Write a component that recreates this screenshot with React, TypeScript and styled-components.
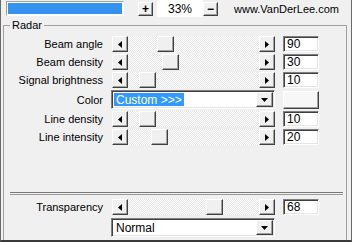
import React from 'react'
import styled, { createGlobalStyle, css } from 'styled-components'

const GlobalStyle = createGlobalStyle`
  html, body {
    margin: 0;
    padding: 0;
    background: #f0f0f0;
  }
  body {
    font-family: "Liberation Sans", Arial, sans-serif;
    font-size: 11px;
    color: #000;
  }
`

const raised = css`
  box-sizing: border-box;
  background: #f0f0f0;
  border: 1px solid;
  border-color: #fff #404040 #404040 #fff;
  box-shadow: inset -1px -1px 0 #a0a0a0;
`

const sunken = css`
  box-sizing: border-box;
  background: #fff;
  border: 1px solid;
  border-color: #808080 #fff #fff #808080;
  box-shadow: inset 1px 1px 0 #404040, inset -1px -1px 0 #e4e4e4;
`

const Frame = styled.div`
  width: 352px;
  height: 242px;
  box-sizing: border-box;
  border-left: 1px solid #6a6a6a;
  border-right: 1px solid #6a6a6a;
  border-bottom: 2px solid #3a3a3a;
  display: flex;
  flex-direction: column;
  overflow: hidden;
  background: #f0f0f0;
`

const TopBar = styled.div`
  height: 19px;
  display: flex;
  align-items: center;
  padding-left: 5px;
  flex-shrink: 0;
`

const Progress = styled.div`
  width: 118px;
  height: 15px;
  box-sizing: border-box;
  border: 1px solid;
  border-color: #a0a0a0 #fff #fff #a0a0a0;
  background: #fff;
  padding: 1px;
  margin-bottom: 2px;
  display: flex;
`

const ProgressFill = styled.div`
  height: 100%;
  background: #3592ee;
`

const ZoomButton = styled.div<{ $first?: boolean }>`
  ${raised}
  width: 15px;
  height: 14px;
  margin-left: ${p => (p.$first ? '14px' : '0')};
  margin-bottom: 2px;
  display: flex;
  align-items: center;
  justify-content: center;
  font-size: 12px;
  font-weight: bold;
  line-height: 1;
`

const ZoomValue = styled.div`
  width: 46px;
  height: 17px;
  margin: 0 0 2px 4px;
  background: #fff;
  display: flex;
  align-items: center;
  justify-content: center;
  font-size: 12px;
`

const SiteLink = styled.div`
  margin-left: 16px;
  margin-bottom: 2px;
  white-space: nowrap;
`

const Group = styled.fieldset`
  flex: 1;
  margin: 0 4px 0 2px;
  padding: 0;
  min-width: 0;
  border: 1px solid #a0a0a0;
  border-bottom: none;
`

const Legend = styled.legend`
  margin-left: 6px;
  padding: 0 2px;
  line-height: 13px;
  font-size: 11px;
`

const Rows = styled.div`
  display: flex;
  flex-direction: column;
  gap: 2px;
  padding-top: 4px;
`

const Row = styled.div<{ $tall?: boolean; $top?: number }>`
  display: grid;
  grid-template-columns: 99px 164px 36px;
  column-gap: 8px;
  align-items: center;
  height: ${p => (p.$tall ? '19px' : '16px')};
  margin-top: ${p => p.$top ?? 0}px;
`

const Label = styled.div`
  text-align: right;
  white-space: nowrap;
`

const Slider = styled.div`
  display: flex;
  height: 16px;
  margin-left: 1px;
`

const ArrowButton = styled.div`
  ${raised}
  width: 16px;
  height: 16px;
  flex-shrink: 0;
  display: flex;
  align-items: center;
  justify-content: center;
`

const Track = styled.div`
  flex: 1;
  height: 16px;
  display: flex;
  background: repeating-conic-gradient(#fff 0 25%, #e6e6e6 0 50%) 0 0 / 2px 2px;
`

const Thumb = styled.div`
  ${raised}
  width: 17px;
  height: 16px;
`

const ValueBox = styled.div`
  ${sunken}
  height: 16px;
  padding-left: 3px;
  display: flex;
  align-items: center;
  font-size: 12px;
`

const Select = styled.div`
  ${sunken}
  height: 19px;
  display: flex;
  align-items: center;
  padding: 2px 1px 2px 2px;
  font-size: 12px;
`

const SelectText = styled.span<{ $selected?: boolean }>`
  flex: 1;
  display: flex;
  align-items: center;
  height: 100%;
  span {
    padding: 0 2px;
    height: 100%;
    display: flex;
    align-items: center;
    background: ${p => (p.$selected ? '#3399ff' : 'transparent')};
    color: ${p => (p.$selected ? '#fff' : '#000')};
  }
`

const DropButton = styled.div`
  ${raised}
  width: 17px;
  height: 15px;
  display: flex;
  align-items: center;
  justify-content: center;
`

const Swatch = styled.div`
  ${raised}
  height: 18px;
  background: #f7f7f7;
`

const Separator = styled.div`
  height: 1px;
  margin: 47px 3px 0 6px;
  border-top: 1px solid #7a7a7a;
  border-bottom: 1px solid #9a9a9a;
`

function Arrow ({ dir }: { dir: 'left' | 'right' | 'down' }) {
  if (dir === 'down') {
    return (
      <svg width='7' height='4' viewBox='0 0 7 4'>
        <polygon points='0,0 7,0 3.5,4' fill='#000' />
      </svg>
    )
  }
  return (
    <svg width='4' height='7' viewBox='0 0 4 7'>
      <polygon points={dir === 'left' ? '4,0 4,7 0,3.5' : '0,0 0,7 4,3.5'} fill='#000' />
    </svg>
  )
}

const TRACK = 131 - 17

function SliderRow ({ label, value, max, top }: { label: string, value: number, max: number, top?: number }) {
  const offset = Math.round((value / max) * TRACK)
  return (
    <Row $top={top}>
      <Label>{label}</Label>
      <Slider>
        <ArrowButton><Arrow dir='left' /></ArrowButton>
        <Track>
          <Thumb style={{ marginLeft: offset }} />
        </Track>
        <ArrowButton><Arrow dir='right' /></ArrowButton>
      </Slider>
      <ValueBox>{value}</ValueBox>
    </Row>
  )
}

function Dropdown ({ text, selected }: { text: string, selected?: boolean }) {
  return (
    <Select>
      <SelectText $selected={selected}><span>{text}</span></SelectText>
      <DropButton><Arrow dir='down' /></DropButton>
    </Select>
  )
}

export default function App () {
  return (
    <>
      <GlobalStyle />
      <Frame>
        <TopBar>
          <Progress><ProgressFill style={{ width: '100%' }} /></Progress>
          <ZoomButton $first>+</ZoomButton>
          <ZoomValue>33%</ZoomValue>
          <ZoomButton>−</ZoomButton>
          <SiteLink>www.VanDerLee.com</SiteLink>
        </TopBar>
        <Group>
          <Legend>Radar</Legend>
          <Rows>
            <SliderRow label='Beam angle' value={90} max={360} />
            <SliderRow label='Beam density' value={30} max={100} />
            <SliderRow label='Signal brightness' value={10} max={100} />
            <Row $tall>
              <Label>Color</Label>
              <Dropdown text='Custom >>>' selected />
              <Swatch />
            </Row>
            <SliderRow label='Line density' value={10} max={100} />
            <SliderRow label='Line intensity' value={20} max={100} />
          </Rows>
          <Separator />
          <SliderRow label='Transparency' value={68} max={100} top={4} />
          <Row $tall $top={3}>
            <Label />
            <Dropdown text='Normal' />
          </Row>
        </Group>
      </Frame>
    </>
  )
}
